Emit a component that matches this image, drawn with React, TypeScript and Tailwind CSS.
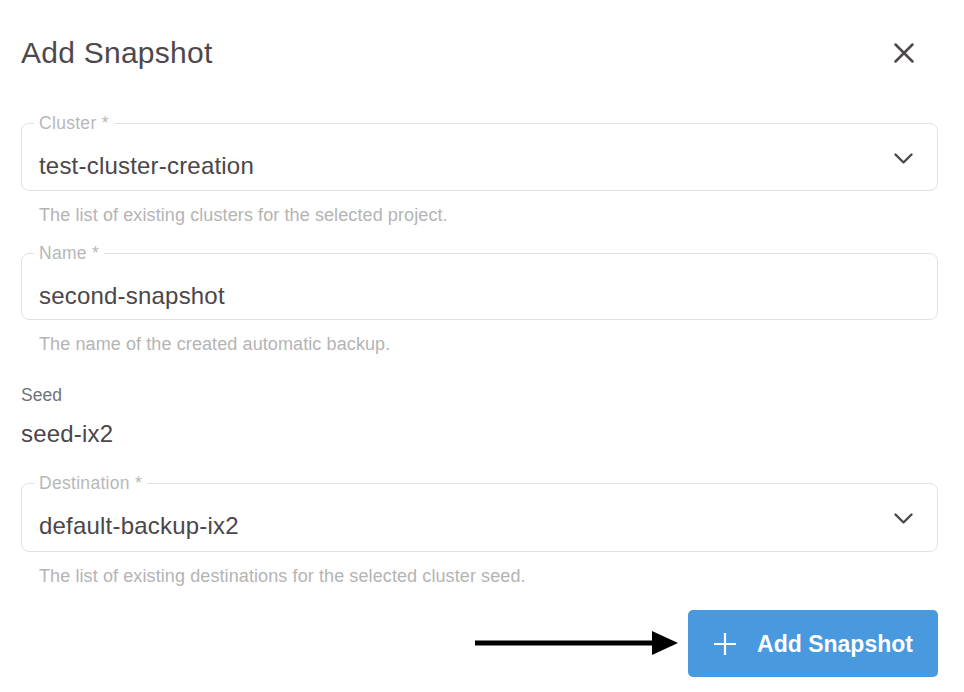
import React from "react";

function Chevron() {
  return (
    <svg width="19" height="12" viewBox="0 0 19 12" className="mt-[-1px] mr-[7px]" fill="none">
      <polyline points="1.5,1.5 9.5,9.5 17.5,1.5" stroke="#4e484c" strokeWidth="2.4" strokeLinecap="round" strokeLinejoin="round" />
    </svg>
  );
}

function Field({
  label,
  value,
  select,
  pb,
}: {
  label: string;
  value: string;
  select?: boolean;
  pb: string;
}) {
  return (
    <fieldset className={`border border-[#e1e1e1] rounded-[8px] px-[17px] pt-[22px] ${pb} min-w-0`}>
      <legend className="-ml-[5px] px-[5px] text-[17.5px] tracking-[0.3px] leading-[18px] text-[#b7b7b7]">{label}</legend>
      <div className="flex items-start justify-between">
        <div className="text-[24px] tracking-[0.2px] leading-[24px] text-[#4b4649]">{value}</div>
        {select && <Chevron />}
      </div>
    </fieldset>
  );
}

function Hint({ children }: { children: React.ReactNode }) {
  return <div className="mt-[14px] pl-[18px] text-[18px] tracking-[0.1px] leading-[20px] text-[#b4b4b4]">{children}</div>;
}

export default function App() {
  return (
    <div className="font-['Liberation_Sans',Arial,Helvetica,sans-serif] w-[964px] h-[692px] bg-white pt-[38px] pl-[21px] pr-[26px] overflow-hidden">
      <div className="flex items-center justify-between">
        <h1 className="text-[30px] tracking-[0.25px] leading-[30px] text-[#4e484c] font-normal">Add Snapshot</h1>
        <svg width="20" height="20" viewBox="0 0 20 20" className="mr-[24px]" fill="none">
          <path d="M1.5 1.5 L18.5 18.5 M18.5 1.5 L1.5 18.5" stroke="#4e484c" strokeWidth="2.5" strokeLinecap="round" />
        </svg>
      </div>

      <div className="mt-[46px]">
        <Field label="Cluster *" value="test-cluster-creation" select pb="pb-[12px]" />
      </div>
      <Hint>The list of existing clusters for the selected project.</Hint>

      <div className="mt-[19px]">
        <Field label="Name *" value="second-snapshot" pb="pb-[11px]" />
      </div>
      <Hint>The name of the created automatic backup.</Hint>

      <div className="mt-[31px] text-[17.5px] leading-[20px] text-[#6f7378]">Seed</div>
      <div className="mt-[17px] text-[24px] tracking-[0.2px] leading-[24px] text-[#4b4649]">seed-ix2</div>

      <div className="mt-[28px]">
        <Field label="Destination *" value="default-backup-ix2" select pb="pb-[13px]" />
      </div>
      <Hint>The list of existing destinations for the selected cluster seed.</Hint>

      <div className="mt-[24px] flex items-center justify-end gap-[10px]">
        <svg width="203" height="26" viewBox="0 0 203 26" className="mt-[-2px]">
          <rect x="0" y="10.5" width="180" height="5" fill="#000" />
          <polygon points="177,1 203,13 177,25" fill="#000" />
        </svg>
        <button className="w-[250px] h-[67px] rounded-[5px] bg-[#4899de] flex items-center justify-center gap-[20px] text-white">
          <svg width="24" height="24" viewBox="0 0 24 24" fill="none">
            <path d="M12 1 V23 M1 12 H23" stroke="#fff" strokeWidth="2.2" />
          </svg>
          <span className="text-[23px] font-bold leading-[24px]">Add Snapshot</span>
        </button>
      </div>
    </div>
  );
}
